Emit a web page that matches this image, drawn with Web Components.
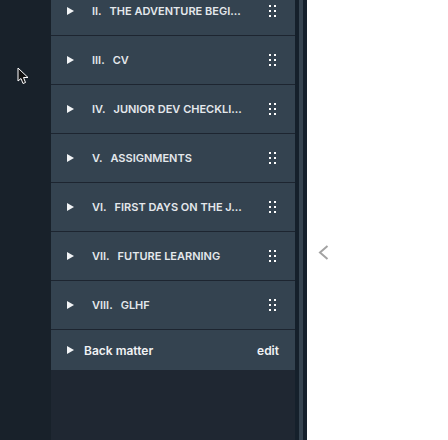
<!DOCTYPE html>
<html>
<head>
<meta charset="utf-8">
<style>
  html, body { margin: 0; height: 100%; background: #1f2732; }
  body { overflow: hidden; font-family: Inter, "Liberation Sans", sans-serif; }
</style>
</head>
<body>
<app-shell>
  <toc-row num="II." title="THE ADVENTURE BEGI..."></toc-row>
  <toc-row num="III." title="CV"></toc-row>
  <toc-row num="IV." title="JUNIOR DEV CHECKLI..."></toc-row>
  <toc-row num="V." title="ASSIGNMENTS"></toc-row>
  <toc-row num="VI." title="FIRST DAYS ON THE J..."></toc-row>
  <toc-row num="VII." title="FUTURE LEARNING"></toc-row>
  <toc-row num="VIII." title="GLHF"></toc-row>
  <back-row title="Back matter" action="edit"></back-row>
</app-shell>

<script>
const arrow = `<svg width="7" height="8" viewBox="0 0 7 8"><path d="M0 0L7 4L0 8Z" fill="#f2f4f6"/></svg>`;

class AppShell extends HTMLElement {
  constructor() {
    super();
    this.attachShadow({ mode: "open" });
    this.shadowRoot.innerHTML = `
      <style>
        :host { display: flex; width: 448px; height: 440px; overflow: hidden; position: relative; }
        .rail { width: 51px; flex: none; background: #18212a; }
        .main { width: 244px; flex: none; background: #1f2732; overflow: hidden; }
        .list { margin-top: -13px; display: flex; flex-direction: column; }
        .track { width: 12px; flex: none; display: flex; justify-content: center; background: #15202b; }
        .thumb { width: 4px; background: #364450; }
        .panel { flex: 1; background: #fff; padding: 244px 0 0 11px; box-sizing: border-box; }
        .cursor { position: absolute; left: 17px; top: 67px; }
      </style>
      <div class="rail"></div>
      <div class="main"><div class="list"><slot></slot></div></div>
      <div class="track"><div class="thumb"></div></div>
      <div class="panel">
        <svg width="11" height="15" viewBox="0 0 11 15"><path d="M9.5 1L2 7.5L9.5 14" fill="none" stroke="#a3a3a3" stroke-width="2"/></svg>
      </div>
      <svg class="cursor" width="12" height="18" viewBox="0 0 12 18"><path d="M1 1V14L4 11.5L6 16.5L8.5 15.5L6.5 10.5H11Z" fill="#111" stroke="#fff" stroke-width="1"/></svg>
    `;
  }
}

class TocRow extends HTMLElement {
  constructor() {
    super();
    this.attachShadow({ mode: "open" });
  }
  connectedCallback() {
    this.shadowRoot.innerHTML = `
      <style>
        :host { display: flex; align-items: center; height: 48px; background: #344350; border-bottom: 1px solid #1d2530; padding-left: 16px; color: #e4e8ec; font: 600 11px Inter, "Liberation Sans", sans-serif; }
        .arrow { display: flex; width: 25px; flex: none; }
        .num { margin-right: 8px; }
        .title { flex: 1; white-space: nowrap; }
        .grip { width: 8px; margin-right: 18px; display: grid; grid-template-columns: 2px 2px; gap: 3px 3px; }
        .grip i { width: 2px; height: 2px; background: #fff; }
      </style>
      <span class="arrow">${arrow}</span>
      <span class="num">${this.getAttribute("num")}</span>
      <span class="title">${this.getAttribute("title")}</span>
      <span class="grip"><i></i><i></i><i></i><i></i><i></i><i></i></span>
    `;
  }
}

class BackRow extends HTMLElement {
  constructor() {
    super();
    this.attachShadow({ mode: "open" });
  }
  connectedCallback() {
    this.shadowRoot.innerHTML = `
      <style>
        :host { display: flex; align-items: center; height: 40px; background: #344350; padding-left: 16px; color: #f0f2f4; font: 600 12px Inter, "Liberation Sans", sans-serif; }
        .arrow { display: flex; width: 17px; flex: none; }
        .title { flex: 1; }
        .action { margin-right: 16px; }
      </style>
      <span class="arrow">${arrow}</span>
      <span class="title">${this.getAttribute("title")}</span>
      <span class="action">${this.getAttribute("action")}</span>
    `;
  }
}

customElements.define("app-shell", AppShell);
customElements.define("toc-row", TocRow);
customElements.define("back-row", BackRow);
</script>
</body>
</html>
